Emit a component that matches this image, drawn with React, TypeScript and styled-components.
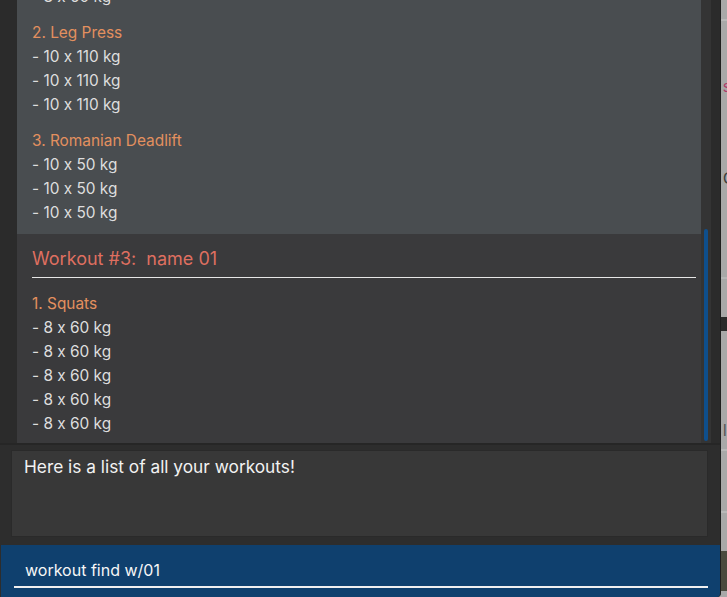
import React from "react";
import styled, { createGlobalStyle } from "styled-components";

const Global = createGlobalStyle`
  html, body { margin: 0; padding: 0; background: #a9a9a9; }
  body {
    width: 727px; height: 597px; overflow: hidden;
    font-family: "Inter", "Liberation Sans", sans-serif;
    font-feature-settings: "calt" 0;
  }
  #root { width: 727px; height: 597px; }
`;

const Desktop = styled.div`
  display: flex;
  width: 727px;
  height: 597px;
`;

const Window = styled.div`
  width: 720px;
  height: 597px;
  background: #2d2d2d;
  display: flex;
  flex-direction: column;
  border-right: 1px solid #1e1e1e;
  border-bottom-right-radius: 4px;
  overflow: hidden;
`;

const ListArea = styled.div`
  height: 443px;
  flex-shrink: 0;
  display: flex;
  padding-left: 17px;
  background: #2b2b2b;
  border-bottom: 2px solid #262626;
`;

const ListView = styled.div`
  width: 684px;
  height: 443px;
  overflow: hidden;
`;

const ListInner = styled.div`
  display: flex;
  flex-direction: column;
`;

const Cell = styled.div<{ $bg: string }>`
  background: ${(p) => p.$bg};
  padding: 0 5px 9px 15px;
`;

const Heading = styled.div`
  margin-top: 13px;
  height: 24px;
  line-height: 24px;
  padding-bottom: 6px;
  border-bottom: 1px solid #e6e6e6;
  color: #df6f60;
  font-size: 18px;
  white-space: pre;
`;

const Group = styled.div<{ $first?: boolean }>`
  margin-top: ${(p) => (p.$first ? "14px" : "12px")};
  display: flex;
  flex-direction: column;
`;

const Name = styled.div`
  height: 24px;
  line-height: 24px;
  color: #e3905f;
  font-size: 15.4px;
`;

const SetLine = styled.div`
  height: 24px;
  line-height: 24px;
  color: #dedede;
  font-size: 15.4px;
`;

const Track = styled.div`
  width: 10px;
  background: #343434;
  position: relative;
`;

const Thumb = styled.div`
  position: absolute;
  left: 3px;
  width: 4px;
  top: 229px;
  height: 212px;
  border-radius: 2px;
  background: #0f4f8c;
`;

const ResultWrap = styled.div`
  padding: 5px 12px 8px 11px;
  height: 100px;
  flex-shrink: 0;
  box-sizing: border-box;
  display: flex;
`;

const ResultBox = styled.div`
  flex: 1;
  background: #383838;
  border: 1px solid #2a2a2a;
  padding: 5px 12px;
  color: #f2f2f2;
  font-size: 17.3px;
  line-height: 22px;
`;

const CommandBar = styled.div`
  flex: 1;
  background: #0f406e;
  margin-left: 1px;
  padding: 12px 12px 0 13px;
  display: flex;
  flex-direction: column;
`;

const CommandInput = styled.div`
  padding: 3px 0 6px 11px;
  border-bottom: 2px solid #f0f0f0;
  color: #f6f6f6;
  font-size: 16px;
  line-height: 20px;
`;

const BackWindow = styled.div`
  flex: 1;
  background: #a8a8a8;
  display: flex;
  flex-direction: column;
  font-family: "Liberation Sans", sans-serif;
  font-size: 16px;
  overflow: hidden;
`;

const BackRule = styled.div<{ $h: number; $c?: string }>`
  height: ${(p) => p.$h}px;
  background: ${(p) => p.$c || "transparent"};
  flex-shrink: 0;
`;

const BackGlyph = styled.div<{ $c: string }>`
  height: 20px;
  line-height: 20px;
  padding-left: 2px;
  color: ${(p) => p.$c};
  flex-shrink: 0;
`;

type Ex = { name: string; sets: string[] };

const w2: Ex[] = [
  { name: "2. Leg Press", sets: ["- 10 x 110 kg", "- 10 x 110 kg", "- 10 x 110 kg"] },
  { name: "3. Romanian Deadlift", sets: ["- 10 x 50 kg", "- 10 x 50 kg", "- 10 x 50 kg"] },
];

const w3: Ex[] = [
  {
    name: "1. Squats",
    sets: ["- 8 x 60 kg", "- 8 x 60 kg", "- 8 x 60 kg", "- 8 x 60 kg", "- 8 x 60 kg"],
  },
];

function ExerciseGroup({ ex, first }: { ex: Ex; first?: boolean }) {
  return (
    <Group $first={first}>
      <Name>{ex.name}</Name>
      {ex.sets.map((s, j) => (
        <SetLine key={j}>{s}</SetLine>
      ))}
    </Group>
  );
}

export default function App() {
  return (
    <>
      <Global />
      <Desktop>
        <Window>
          <ListArea>
            <ListView>
              <ListInner style={{ marginTop: -15 }}>
                <Cell $bg="#494d50">
                  <SetLine>- 8 x 60 kg</SetLine>
                  {w2.map((e) => (
                    <ExerciseGroup key={e.name} ex={e} />
                  ))}
                </Cell>
                <Cell $bg="#3a3a3c">
                  <Heading>{"Workout #3:  name 01"}</Heading>
                  {w3.map((e) => (
                    <ExerciseGroup key={e.name} ex={e} first />
                  ))}
                </Cell>
              </ListInner>
            </ListView>
            <Track>
              <Thumb />
            </Track>
          </ListArea>
          <ResultWrap>
            <ResultBox>Here is a list of all your workouts!</ResultBox>
          </ResultWrap>
          <CommandBar>
            <CommandInput>workout find w/01</CommandInput>
          </CommandBar>
        </Window>
        <BackWindow>
          <BackRule $h={19} />
          <BackRule $h={2} $c="#b8b8b8" />
          <BackRule $h={56} />
          <BackGlyph $c="#b03a68">s</BackGlyph>
          <BackRule $h={72} />
          <BackGlyph $c="#3c3c3c">C</BackGlyph>
          <BackRule $h={88} />
          <BackRule $h={2} $c="#b6b6b6" />
          <BackRule $h={38} />
          <BackRule $h={14} $c="#2a2a2a" />
          <BackRule $h={90} />
          <BackGlyph $c="#555">l</BackGlyph>
          <BackRule $h={8} />
          <BackRule $h={2} $c="#b8b8b8" />
          <BackRule $h={60} />
          <BackRule $h={2} $c="#b8b8b8" />
          <BackRule $h={38} />
          <BackRule $h={40} $c="#4a4a3e" />
        </BackWindow>
      </Desktop>
    </>
  );
}
